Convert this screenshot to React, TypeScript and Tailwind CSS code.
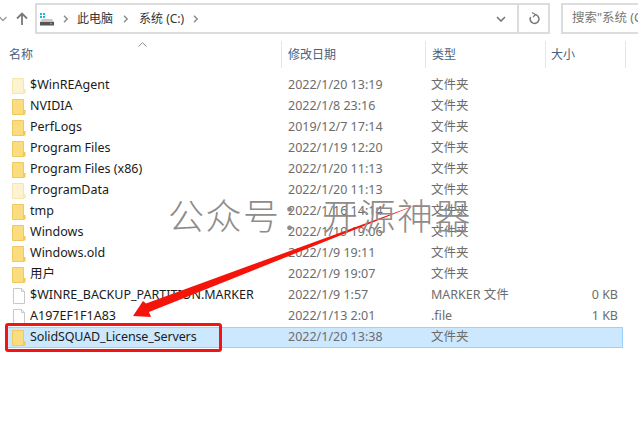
const font = { fontFamily: '"Noto Sans","Noto Sans CJK SC",sans-serif' };

type Row = { n: string; d: string; t: string; s?: string; k: 'f' | 'h' | 'p'; sel?: boolean };
const rows: Row[] = [
  { n: '$WinREAgent', d: '2022/1/20 13:19', t: '文件夹', k: 'h' },
  { n: 'NVIDIA', d: '2022/1/8 23:16', t: '文件夹', k: 'f' },
  { n: 'PerfLogs', d: '2019/12/7 17:14', t: '文件夹', k: 'f' },
  { n: 'Program Files', d: '2022/1/19 12:20', t: '文件夹', k: 'f' },
  { n: 'Program Files (x86)', d: '2022/1/20 11:13', t: '文件夹', k: 'f' },
  { n: 'ProgramData', d: '2022/1/20 11:13', t: '文件夹', k: 'h' },
  { n: 'tmp', d: '2022/1/16 14:14', t: '文件夹', k: 'f' },
  { n: 'Windows', d: '2022/1/19 19:06', t: '文件夹', k: 'f' },
  { n: 'Windows.old', d: '2022/1/9 19:11', t: '文件夹', k: 'f' },
  { n: '用户', d: '2022/1/9 19:07', t: '文件夹', k: 'f' },
  { n: '$WINRE_BACKUP_PARTITION.MARKER', d: '2022/1/9 1:57', t: 'MARKER 文件', s: '0 KB', k: 'p' },
  { n: 'A197EF1F1A83', d: '2022/1/13 2:01', t: '.file', s: '1 KB', k: 'p' },
  { n: 'SolidSQUAD_License_Servers', d: '2022/1/20 13:38', t: '文件夹', k: 'f', sel: true },
];

function Icon({ k }: { k: Row['k'] }) {
  if (k === 'p')
    return (
      <svg width="14" height="16" viewBox="0 0 14 16" className="shrink-0">
        <path d="M1.5 .5H9.5L12.5 3.5V15.5H1.5Z" fill="#fff" stroke="#c9c9c9" />
        <path d="M9.5 .5V3.5H12.5" fill="none" stroke="#c9c9c9" />
      </svg>
    );
  const h = k === 'h';
  return (
    <svg width="14" height="16" viewBox="0 0 14 16" className="shrink-0">
      <path d="M.5 .5H11.5V15.5H.5Z" fill={h ? '#fdf3d0' : '#fbdc7e'} stroke={h ? '#f5e6b0' : '#eec95f'} />
      <path d="M11 11H13.5V15.5H11Z" fill={h ? '#f7e7b0' : '#f2c94f'} />
    </svg>
  );
}

function Chevron() {
  return (
    <svg width="6" height="8" viewBox="0 0 6 8" className="shrink-0">
      <path d="M1 .8L4.2 4L1 7.2" fill="none" stroke="#8a8a8a" strokeWidth="1.4" />
    </svg>
  );
}

export default function App() {
  return (
    <div className="relative w-[638px] h-[428px] bg-white overflow-hidden" style={font}>
      {/* Address bar */}
      <div className="flex items-center h-[34px] pt-[3px]">
        <svg width="8" height="6" viewBox="0 0 8 6" className="ml-[-1px] shrink-0">
          <path d="M.5 1L4 4.5L7.5 1" fill="none" stroke="#9a9a9a" strokeWidth="1.3" />
        </svg>
        <svg width="14" height="14" viewBox="0 0 14 14" className="ml-[8px] shrink-0">
          <path d="M7 13V2M2 6.5L7 1.5L12 6.5" fill="none" stroke="#7a7a7a" strokeWidth="1.8" />
        </svg>
        <div className="ml-[6px] w-[515px] h-[31px] border-2 border-[#dcdcdc] flex items-center shrink-0">
          <svg width="16" height="14" viewBox="0 0 16 14" className="ml-[2px] shrink-0">
            <rect x="1" y="1" width="2" height="2" fill="#1fb4ee" />
            <rect x="4" y="1" width="2" height="2" fill="#1fb4ee" />
            <rect x="1" y="4" width="2" height="2" fill="#1fb4ee" />
            <rect x="4" y="4" width="2" height="2" fill="#1fb4ee" />
            <path d="M3 7H13L15 10H1Z" fill="#c9c9c9" />
            <rect x="1" y="10" width="14" height="3.5" fill="#555" />
            <rect x="11" y="11" width="2" height="1.2" fill="#37d63c" />
          </svg>
          <span className="ml-[8px]"><Chevron /></span>
          <span className="ml-[8px] text-[12px] text-[#333]">此电脑</span>
          <span className="ml-[10px]"><Chevron /></span>
          <span className="ml-[10px] text-[12px] text-[#333]">系统 (C:)</span>
          <span className="ml-[9px]"><Chevron /></span>
          <svg width="10" height="6" viewBox="0 0 10 6" className="ml-auto mr-[11px] shrink-0">
            <path d="M1 1L5 5L9 1" fill="none" stroke="#777" strokeWidth="1.6" />
          </svg>
          <div className="w-[31px] h-full border-l-2 border-[#dcdcdc] flex items-center justify-center shrink-0">
            <svg width="12" height="13" viewBox="0 0 12 13">
              <path d="M7 2.6A4.4 4.4 0 1 1 2.6 5" fill="none" stroke="#777" strokeWidth="1.5" />
              <path d="M4 .5L7.4 2.6L5 5" fill="none" stroke="#777" strokeWidth="1.2" />
            </svg>
          </div>
        </div>
        <div className="ml-[11px] flex-1 h-[31px] border-2 border-r-0 border-[#dcdcdc] flex items-center pl-[9px] overflow-hidden whitespace-nowrap text-[12.5px] text-[#777]">
          搜索"系统 (C:)"
        </div>
      </div>

      {/* Column headers */}
      <div className="flex h-[27px] mt-[7px] text-[12px] text-[#4c607a] relative">
        <div className="w-[282px] pl-[9px] flex items-center border-r border-[#e5e5e5] relative">
          名称
          <svg width="9" height="5" viewBox="0 0 9 5" className="absolute left-[138px] top-[1px]">
            <path d="M.5 4.5L4.5 .7L8.5 4.5" fill="none" stroke="#8a8a8a" />
          </svg>
        </div>
        <div className="w-[144px] pl-[6px] flex items-center border-r border-[#e5e5e5]">修改日期</div>
        <div className="w-[120px] pl-[6px] flex items-center border-r border-[#e5e5e5]">类型</div>
        <div className="w-[80px] pl-[5px] flex items-center border-r border-[#e5e5e5]">大小</div>
      </div>

      {/* File list */}
      <div className="mt-[7px] pl-[5px] w-[623px]">
        {rows.map((r) => (
          <div
            key={r.n}
            className={`flex items-center h-[21px] text-[12.5px] whitespace-nowrap border ${
              r.sel ? 'bg-[#cce8ff] border-[#99d1ff]' : 'border-transparent'
            }`}
          >
            <div className="w-[276px] shrink-0 flex items-center pl-[6px] text-[#1a1a1a]">
              <Icon k={r.k} />
              <span className={`ml-[4px] ${r.sel ? 'tracking-[-0.12px]' : ''}`}>{r.n}</span>
            </div>
            <div className="w-[144px] shrink-0 pl-[6px] text-[#6d6d6d]">{r.d}</div>
            <div className="w-[120px] shrink-0 pl-[5px] text-[#6d6d6d]">{r.t}</div>
            <div className="w-[72px] shrink-0 text-right text-[#6d6d6d]">{r.s}</div>
          </div>
        ))}
      </div>

      {/* Annotations over the screenshot */}
      <div className="absolute left-[5px] top-[323px] w-[217px] h-[29px] border-[3px] border-[#f01414] rounded-[3px]" />
      <svg width="638" height="428" viewBox="0 0 638 428" className="absolute left-0 top-0 pointer-events-none">
        <path d="M420 203.5L146 303.5L143 301L133 316L151 317L149 312Z" fill="#f5140a" />
      </svg>
      <div className="absolute left-[168px] top-[192px] text-[36px] leading-[50px] text-[#8f8b8b] whitespace-nowrap font-light tracking-[1.5px] pointer-events-none">
        公众号<span className="mr-[4px]">：</span>开源神器
      </div>
    </div>
  );
}
